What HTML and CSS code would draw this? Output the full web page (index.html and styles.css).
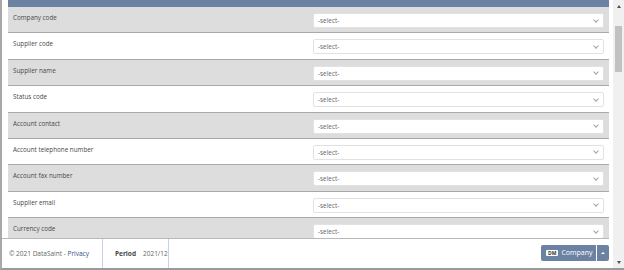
FILE: index.html
```html
<!DOCTYPE html>
<html>
<head>
	<title>Supplier fields</title>
	<link rel="stylesheet" href="styles.css">
</head>
<body>
	<div class="window">
		<div class="viewport">
			<main class="content">
				<div class="topbar"></div>
				<div class="row"><label>Company code</label><div class="select"><span>-select-</span><span class="chev"></span></div></div>
				<div class="row"><label>Supplier code</label><div class="select"><span>-select-</span><span class="chev"></span></div></div>
				<div class="row"><label>Supplier name</label><div class="select"><span>-select-</span><span class="chev"></span></div></div>
				<div class="row"><label>Status code</label><div class="select"><span>-select-</span><span class="chev"></span></div></div>
				<div class="row"><label>Account contact</label><div class="select"><span>-select-</span><span class="chev"></span></div></div>
				<div class="row"><label>Account telephone number</label><div class="select"><span>-select-</span><span class="chev"></span></div></div>
				<div class="row"><label>Account fax number</label><div class="select"><span>-select-</span><span class="chev"></span></div></div>
				<div class="row"><label>Supplier email</label><div class="select"><span>-select-</span><span class="chev"></span></div></div>
				<div class="row"><label>Currency code</label><div class="select"><span>-select-</span><span class="chev"></span></div></div>
			</main>
			<footer class="footer">
				<div class="copy"><span>&copy; 2021 DataSaint -&nbsp;</span><a href="#">Privacy</a></div>
				<div class="period"><b>Period</b><span>2021/12</span></div>
				<div class="spacer"></div>
				<div class="company">
					<button class="company-main"><span class="badge">DM</span>Company</button>
					<button class="company-caret"><span class="caret"></span></button>
				</div>
			</footer>
		</div>
		<div class="scrollbar">
			<div class="arrow up"></div>
			<div class="track"><div class="thumb"></div></div>
			<div class="arrow down"></div>
		</div>
	</div>
</body>
</html>
```

FILE: styles.css
```css
/* fonts */
body {
	font-family: "Open Sans", "Noto Sans", sans-serif;
	color: #444;
}

.row label {
	font-size: 6.3px;
	line-height: 9px;
}

.select {
	font-size: 6.4px;
	line-height: 9px;
}

.footer {
	font-size: 6.5px;
	line-height: 10px;
	white-space: nowrap;
}

/* layout */
html, body {
	margin: 0;
	height: 100%;
}

.window {
	display: flex;
	height: 270px;
	box-sizing: border-box;
	border-left: 2px solid #a8a8a8;
	border-bottom: 2px solid #9a9a9a;
}

.viewport {
	flex: 1;
	display: flex;
	flex-direction: column;
	min-width: 0;
}

main.content {
	flex: 1;
	overflow: hidden;
	padding: 0 0 0 6px;
}

.topbar {
	height: 7px;
}

.row {
	display: grid;
	grid-template-columns: 305px 1fr;
	height: 26.4px;
	box-sizing: border-box;
	padding-right: 5px;
}

.row label {
	padding: 6px 0 0 5px;
}

.select {
	display: flex;
	align-items: center;
	justify-content: space-between;
	height: 15px;
	margin-top: 6px;
	padding: 0 5px 0 4px;
	box-sizing: border-box;
}

.chev {
	width: 3px;
	height: 3px;
	margin-top: -2px;
	transform: rotate(45deg);
}

.footer {
	display: flex;
	align-items: center;
	height: 30px;
	box-sizing: border-box;
}

.copy {
	width: 101px;
	box-sizing: border-box;
	padding-left: 7px;
	height: 100%;
	display: flex;
	align-items: center;
}

.period {
	width: 66px;
	box-sizing: border-box;
	padding-left: 12px;
	height: 100%;
	display: flex;
	align-items: center;
}

.period b {
	margin-right: 7px;
}

.spacer {
	flex: 1;
}

.company {
	display: flex;
	gap: 1px;
	margin-top: -2px;
}

.company button {
	height: 16px;
	border: 0;
	padding: 0;
	font-family: inherit;
	font-size: 7px;
	display: flex;
	align-items: center;
}

.company-main {
	padding: 0 5px !important;
	width: 55px;
}

.badge {
	font-size: 5px;
	font-weight: 700;
	padding: 0 2px;
	line-height: 6px;
	border-radius: 1px;
	margin-right: 3px;
}

.company-caret {
	width: 12px;
	justify-content: center;
}

.caret {
	width: 0;
	height: 0;
	border-left: 2px solid transparent;
	border-right: 2px solid transparent;
	border-bottom: 2px solid #fff;
}

.scrollbar {
	width: 11px;
	margin-left: 4px;
	display: flex;
	flex-direction: column;
}

.arrow {
	height: 12px;
	display: flex;
	justify-content: center;
	align-items: center;
}

.arrow:before {
	content: '';
	border-left: 2.5px solid transparent;
	border-right: 2.5px solid transparent;
}

.arrow.up:before {
	border-bottom: 3px solid #505050;
}

.arrow.down:before {
	border-top: 3px solid #505050;
}

.track {
	flex: 1;
	padding: 14px 2px 0;
}

.thumb {
	height: 46px;
}

/* colors */
.window {
	background-color: #fff;
}

.topbar {
	background-color: #6c82a3;
}

.row {
	background-color: #dddddd;
	border-bottom: 1.5px solid #a9a9a9;
}

.row:nth-child(odd) {
	background-color: #fff;
}

.row label {
	color: #4a4a4a;
}

.select {
	background-color: #fff;
	border: 1px solid #e2e2e2;
	border-radius: 2px;
	color: #666;
}

.chev {
	border-right: 1px solid #9aa4b4;
	border-bottom: 1px solid #9aa4b4;
}

.footer {
	background-color: #fff;
	border-top: 1px solid #b9b9b9;
	color: #666;
}

.copy a {
	color: #2f4f7f;
	text-decoration: none;
}

.copy, .period {
	border-right: 1.5px solid #c8d2e2;
}

.period b {
	color: #444;
}

.company button {
	background-color: #6c82a3;
	color: #fff;
}

.company-main {
	border-radius: 2px 0 0 2px;
}

.company-caret {
	border-radius: 0 2px 2px 0;
}

.badge {
	background-color: #fff;
	color: #333;
}

.scrollbar {
	background-color: #f0f0f0;
}

.thumb {
	background-color: #c1c1c1;
}
```
